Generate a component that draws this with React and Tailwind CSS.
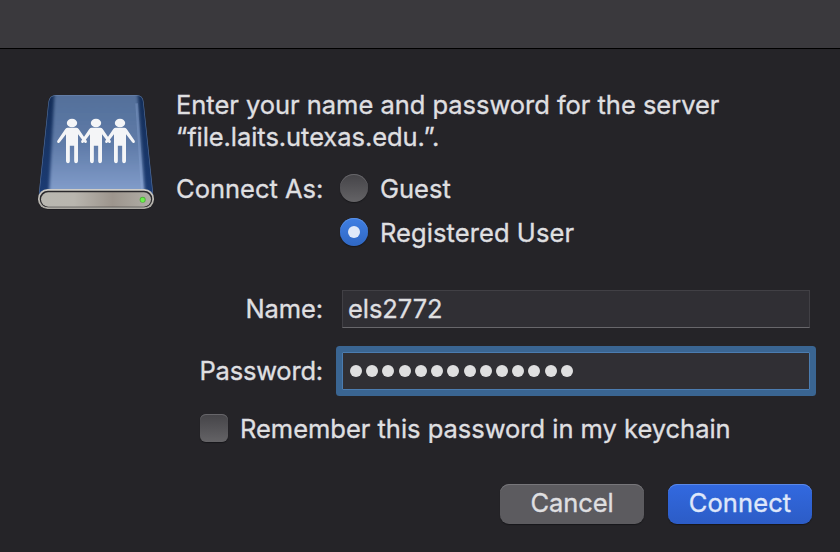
import React from "react";

const Person = ({ x }) => (
  <g transform={`translate(${x} 0)`}>
    <ellipse cx="0" cy="129" rx="15.5" ry="13" />
    <path
      d="M-13 143 H13 Q17 143 20 147 L44 182 Q46 186 43 188 Q39 190 36 186 L18 163 V244 Q17 250 12 250 Q7 250 6.5 244 V197 H-6.5 V244 Q-7 250 -12 250 Q-17 250 -18 244 V163 L-36 186 Q-39 190 -43 188 Q-46 186 -44 182 L-20 147 Q-17 143 -13 143 Z"
    />
  </g>
);

const ServerIcon = () => (
  <svg
    className="w-[116px] h-[118px] shrink-0"
    viewBox="54 39 348 354"
    aria-hidden="true"
  >
    <defs>
      <linearGradient id="face" x1="0" y1="0" x2="0" y2="1">
        <stop offset="0" stopColor="#526e98" />
        <stop offset="0.5" stopColor="#5f7ba8" />
        <stop offset="1" stopColor="#87a2d0" />
      </linearGradient>
      <linearGradient id="side" x1="0" y1="0" x2="0" y2="1">
        <stop offset="0" stopColor="#132d57" />
        <stop offset="1" stopColor="#1c3c74" />
      </linearGradient>
      <linearGradient id="rim" x1="0" y1="0" x2="0" y2="1">
        <stop offset="0" stopColor="#cfcdc8" />
        <stop offset="1" stopColor="#aaa7a1" />
      </linearGradient>
      <linearGradient id="panel" x1="0" y1="0" x2="1" y2="0">
        <stop offset="0" stopColor="#b9b7b0" />
        <stop offset="0.3" stopColor="#b9b6af" />
        <stop offset="0.65" stopColor="#9d958d" />
        <stop offset="1" stopColor="#b0ada6" />
      </linearGradient>
      <filter id="soft" x="-10%" y="-10%" width="120%" height="120%">
        <feGaussianBlur stdDeviation="5" />
      </filter>
      <clipPath id="case">
        <path d="M108 45 H350 Q369 45 371 66 L400 345 H56 L85 66 Q88 45 108 45 Z" />
      </clipPath>
    </defs>
    <g clipPath="url(#case)">
      <rect x="50" y="40" width="360" height="310" fill="url(#side)" />
      <path
        d="M104 30 H352 L376 356 H86 Z"
        fill="url(#face)"
        filter="url(#soft)"
      />
      <path
        d="M350 70 L368 345"
        fill="none"
        stroke="#9ab6e4"
        strokeWidth="8"
        opacity="0.3"
      />
      <path
        d="M108 45 H350 Q369 45 371 66 L400 345 M56 345 L85 66 Q88 45 108 45"
        fill="none"
        stroke="#7790b5"
        strokeWidth="4"
        opacity="0.6"
      />
    </g>
    <rect x="54" y="328" width="348" height="61" rx="30" fill="#111114" opacity="0.5" />
    <rect x="54" y="327" width="348" height="60" rx="29" fill="url(#rim)" />
    <rect x="59" y="332" width="338" height="50" rx="25" fill="#29282b" />
    <rect x="63" y="337" width="330" height="43" rx="21.5" fill="url(#panel)" />
    <circle cx="368" cy="359" r="9" fill="#4fb23a" />
    <circle cx="368" cy="360" r="6.5" fill="#6cf04c" />
    <g fill="#f4f5f7">
      <Person x={156} />
      <Person x={228} />
      <Person x={300} />
    </g>
  </svg>
);

const Radio = ({ checked }) => (
  <span
    className={
      checked
        ? "w-7 h-7 mb-0.5 rounded-full flex items-center justify-center bg-linear-to-b from-[#3f7fe3] to-[#3068c4] shadow-[inset_0_1px_0_#5a90e6,0_1px_1px_#17171a]"
        : "w-7 h-7 mb-0.5 rounded-full bg-linear-to-b from-[#454448] to-[#646366] shadow-[inset_0_1px_0_#67666a,0_1px_1px_#17171a]"
    }
  >
    {checked && <span className="w-3 h-3 rounded-full bg-[#dfe9f9]" />}
  </span>
);

const App = () => {
  return (
    <div className="w-full h-[552px] overflow-hidden bg-[#252428] text-[#dfdfe0] font-['Inter','Liberation_Sans',sans-serif] text-[25.5px] leading-8 whitespace-nowrap [-webkit-text-stroke:0.35px]">
      <div className="h-[49px] bg-[#3a393d] border-b border-black" />
      <div className="flex pl-[38px] pt-10 h-[241px]">
        <div className="pt-1">
          <ServerIcon />
        </div>
        <div className="pl-[22px]">
          <h1>
            <span className="tracking-[-0.03px]">
              Enter your name and password for the server
            </span>
            <br />
            <span className="tracking-[-0.06px]">“file.laits.utexas.edu.”.</span>
          </h1>
          <div className="flex pt-5">
            <span className="w-[164px]">Connect As:</span>
            <div className="flex flex-col gap-3">
              <label className="flex items-center gap-3 h-8">
                <Radio />
                <span>Guest</span>
              </label>
              <label className="flex items-center gap-3 h-8">
                <Radio checked />
                <span className="tracking-[0.08px]">Registered User</span>
              </label>
            </div>
          </div>
        </div>
      </div>

      <div className="flex items-center h-[38px]">
        <span className="w-[323px] text-right tracking-[-0.1px]">Name:</span>
        <div className="ml-[19px] w-[468px] h-full flex items-center pl-[5px] bg-[#302f34] border border-[#414045] border-b-[#68676b]">
          <span className="tracking-[-0.05px]">els2772</span>
        </div>
      </div>
      <div className="flex items-center h-[38px] mt-6">
        <span className="w-[323px] text-right tracking-[-0.2px]">
          Password:
        </span>
        <div className="ml-[19px] w-[468px] h-[38px] flex items-center pl-[7px] bg-[#302f34] border border-[#4b7cb0] ring-6 ring-[#3a6592] rounded-[1px]">
          <div className="flex justify-between w-[223px]">
            {[...Array(14)].map((_, i) => (
              <span key={i} className="w-3 h-3 rounded-full bg-[#dfdfe0]" />
            ))}
          </div>
        </div>
      </div>

      <label className="flex items-center gap-3 pl-[200px] mt-[23px] h-8">
        <span className="w-7 h-7 mb-0.5 rounded-md bg-linear-to-b from-[#454448] to-[#646366] shadow-[inset_0_1px_0_#67666a,0_1px_1px_#17171a]" />
        <span className="tracking-[-0.02px]">
          Remember this password in my keychain
        </span>
      </label>

      <div className="flex justify-end gap-6 pr-7 mt-[39px]">
        <button className="w-36 h-10 pb-[2px] rounded-[9px] flex items-center justify-center bg-[#5c5b5f] shadow-[inset_0_1px_0_#77767a,0_1px_1px_#17171a]">
          <span className="tracking-[-0.1px]">Cancel</span>
        </button>
        <button className="w-36 h-10 pb-[2px] rounded-[9px] flex items-center justify-center bg-linear-to-b from-[#3269e0] to-[#2c5cc6] text-[#dfe7fa] shadow-[inset_0_1px_0_#5a88e8,0_1px_1px_#17171a]">
          <span className="tracking-[0.1px]">Connect</span>
        </button>
      </div>
    </div>
  );
};

export default App;
